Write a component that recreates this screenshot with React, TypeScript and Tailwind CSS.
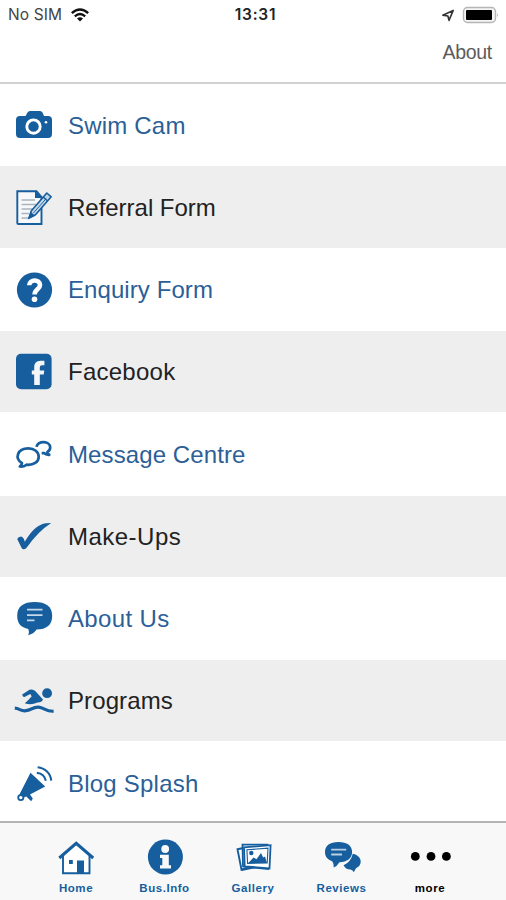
import React from "react";

const BLUE = "#165e9e";

// Icons are drawn in page coordinates; each svg's viewBox is the band it sits in.
const Camera = () => (
  <>
    <path d="M20 116H25.5L27.5 112.5Q28.3 111 30 111H40Q41.7 111 42.5 112.5L44 116H48Q52 116 52 120V134Q52 138 48 138H20Q16 138 16 134V120Q16 116 20 116Z" fill={BLUE} />
    <circle cx="33.5" cy="126.6" r="6.7" fill="none" stroke="#fff" strokeWidth="2.9" />
    <circle cx="46" cy="122.3" r="1.3" fill="#fff" />
  </>
);

const Referral = () => (
  <>
    <path d="M17.3 191.2H36.5L41.5 197V224H18.3Q17.3 224 17.3 223Z" fill="#f7f8fa" stroke={BLUE} strokeWidth="1.9" />
    <path d="M35 190.5L42.3 198H35Z" fill={BLUE} />
    <path d="M21.5 200H35M21.5 204.5H36M21.5 209H33M21.5 213.5H29M21.5 218H28" stroke="#a9b4bf" strokeWidth="1.3" />
    <path d="M29 218L31.2 211L46.8 193L51.2 196.8L35.5 214.8Z" fill="#c3d6e6" stroke={BLUE} strokeWidth="1.6" strokeLinejoin="round" />
    <path d="M43.2 197L47.6 201M29 218L31 213L33.8 215.5Z" stroke={BLUE} strokeWidth="1.4" fill={BLUE} />
    <path d="M33.4 213L46 198.8" stroke={BLUE} strokeWidth="0.9" />
  </>
);

const Question = () => (
  <>
    <circle cx="34.5" cy="290" r="17.6" fill={BLUE} />
    <path d="M29.2 285.3C29.4 279 40 278.8 40 285C40 289.5 34.6 289.3 34.6 294.6" fill="none" stroke="#fff" strokeWidth="4.6" />
    <circle cx="34.5" cy="299.3" r="2.8" fill="#fff" />
  </>
);

const Facebook = () => (
  <>
    <rect x="16" y="353.8" width="35.6" height="35.4" rx="5" fill={BLUE} />
    <path d="M34.2 385V374.6H31.8V370.4H34.2V367.5Q34.2 360.8 40.4 360.8H44.4V365.3H42Q39.8 365.3 39.8 367.6V370.4H44.3L43.7 374.6H39.8V385Z" fill="#f3f5f7" />
  </>
);

const Chats = () => (
  <g fill="none" stroke={BLUE} strokeWidth="2.7" strokeLinejoin="round">
    <path d="M22 463.2C14.5 458.5 17 448.3 28.3 448.3C34.5 448.3 38.7 452 38.7 456.7C38.7 462 33.5 465.4 26.5 464.7Q23.5 467 19.8 466.5Q21.8 465.5 22 463.2Z" />
    <path d="M36.6 446.8C37.4 440.6 50.2 440.3 50.2 447.5Q50.2 450.3 47.4 452Q47.5 453.8 49.3 454.8Q46 455 44 453.1L41.7 453.1" />
  </g>
);

const Check = () => (
  <path d="M17.2 539Q18.3 536.8 21 536.5Q23.6 537 24.8 541.7Q34.5 524.7 46 523.2L51.2 523Q38.5 531 27.2 547Q25.5 549.7 23.2 549.3Q22 549 21.5 547.8Z" fill={BLUE} />
);

const About = () => (
  <>
    <path d="M34.6 602C46 602 52.2 606.5 52.2 615.8C52.2 625 46.5 629.5 36.6 629.6Q33.5 634 28.3 635.3Q29.6 631.5 28.3 629C21 627.5 17.2 623.5 17.2 615.8C17.2 606.5 23.3 602 34.6 602Z" fill={BLUE} />
    <path d="M27 609.7H42.5M27 615.2H42.5M27 620.3H34.5" stroke="#c6d9e9" strokeWidth="1.8" />
  </>
);

const Swimmer = () => (
  <>
    <circle cx="47.1" cy="693.2" r="4.9" fill={BLUE} />
    <path d="M22.2 694.5L29.5 689.8Q33 688.7 35.2 691L43 699.5Q42 702.5 37.5 702.5Q31 705.5 24.8 703.2Q28 701 31.7 696.3L30.2 694L24.5 697Q22.4 697 22.2 694.5Z" fill={BLUE} />
    <path d="M14.8 708.2C20 708.5 20.5 711.4 26 710.7C31 710 33 706.9 38.5 707.2C44.5 707.8 46 711.8 53.6 711.2" fill="none" stroke={BLUE} strokeWidth="3.2" />
  </>
);

const Megaphone = () => (
  <>
    <path d="M30.5 772.7L45.2 786.5L30 794.4L32.8 798.5L31.2 801.2L26.3 796.5L23.5 797.5L19.8 793.8Z" fill={BLUE} />
    <circle cx="20.8" cy="797.6" r="2.6" fill="#fff" stroke={BLUE} strokeWidth="1.8" />
    <path d="M37.6 767.2C45 768 50.7 773.5 51.2 780.6M36.8 772.8C41.8 773.6 45 776.7 45.8 780.8" fill="none" stroke={BLUE} strokeWidth="2" />
  </>
);

const HomeIcon = () => (
  <>
    <path d="M63 855V873.2H89.5V855" fill="#fff" stroke={BLUE} strokeWidth="1.9" />
    <path d="M62 856L76.2 843.6L90.5 856Z" fill="#fff" />
    <path d="M59.3 858L76.2 843.3L93.2 858" fill="none" stroke={BLUE} strokeWidth="3" />
    <path d="M69 860H72.8V864H69ZM77 860.5H84V874H77Z" fill={BLUE} />
  </>
);

const Info = () => (
  <>
    <circle cx="165.4" cy="857" r="17.5" fill={BLUE} />
    <circle cx="165.2" cy="849" r="3.9" fill="#f8f9fa" />
    <path d="M160 854.7H168.8V865.3H171V868.6H160V865.3H162.3V858H160Z" fill="#f8f9fa" />
  </>
);

const Gallery = () => (
  <>
    <path d="M237.5 849.3L246 847.5L250 867L241.5 869.8Z" fill="#fff" stroke={BLUE} strokeWidth="1.9" />
    <path d="M241.5 869.8L261 865.8" stroke={BLUE} strokeWidth="2.4" />
    <path d="M242.5 844.6L267.5 844.6L268 869L243 866.4Z" fill="#fff" stroke={BLUE} strokeWidth="1.8" />
    <path d="M244 847.4L270.6 845.2L269.5 868.4L244.7 866.3Z" fill="#fff" stroke={BLUE} strokeWidth="1.8" />
    <path d="M246.9 849.8L268 848.2L267.2 863L247.6 863.4Z" fill="#fff" stroke={BLUE} strokeWidth="1.1" />
    <circle cx="251.3" cy="853" r="2.2" fill={BLUE} />
    <path d="M248.3 863L253.5 857.4L256.5 859.2L261 853L263.2 857.4L265 856.4L267 863Z" fill={BLUE} />
  </>
);

const Reviews = () => (
  <>
    <path d="M352.8 853.7C358.3 855 361 858.4 360.7 862.2Q360.2 866.2 356.2 868Q355 869.7 353.8 872.3Q353 870 350.4 869.6Q345.5 869.5 343.6 865.3Q350.8 862 352.8 853.7Z" fill={BLUE} />
    <path d="M338.4 842C347 842 352.1 845.6 352.1 852C352.1 858.5 347 862 339.5 862.2Q337 866.2 333.7 867.4Q334.3 864.2 332.2 861.2C327.5 859.7 325 856.7 325 852C325 845.6 330 842 338.4 842Z" fill={BLUE} />
    <path d="M331.2 849.6H346.2M331.2 854.5H342" stroke="#b9d0e2" strokeWidth="1.9" />
  </>
);

const More = () => (
  <>
    <circle cx="415.3" cy="856.4" r="4.4" />
    <circle cx="431" cy="856.4" r="4.4" />
    <circle cx="446.4" cy="856.4" r="4.4" />
  </>
);

const rows = [
  { label: "Swim Cam", top: 84, h: 82, height: "h-[82px]", text: "tracking-[0.2px] pt-px", Icon: Camera },
  { label: "Referral Form", top: 166, h: 82, height: "h-[82px]", text: "tracking-[-0.02px] pt-px", Icon: Referral },
  { label: "Enquiry Form", top: 248, h: 83, height: "h-[83px]", text: "tracking-[0.08px] pt-px", Icon: Question },
  { label: "Facebook", top: 331, h: 81, height: "h-[81px]", text: "tracking-[0.25px] pt-px", Icon: Facebook },
  { label: "Message Centre", top: 412, h: 84, height: "h-[84px]", text: "tracking-[0.1px] pt-px", Icon: Chats },
  { label: "Make-Ups", top: 496, h: 81, height: "h-[81px]", text: "tracking-[0.48px] pt-px", Icon: Check },
  { label: "About Us", top: 577, h: 83, height: "h-[83px]", text: "tracking-[0.35px] pt-px", Icon: About },
  { label: "Programs", top: 660, h: 81, height: "h-[81px]", text: "tracking-[0.1px] pt-px", Icon: Swimmer },
  { label: "Blog Splash", top: 741, h: 80, height: "h-[80px]", text: "tracking-[0.22px] pt-[5px]", Icon: Megaphone },
];

const tabs = [
  { label: "Home", x: 51, color: "text-[#165e9e]", Icon: HomeIcon },
  { label: "Bus.Info", x: 140, color: "text-[#165e9e]", Icon: Info },
  { label: "Gallery", x: 228, color: "text-[#165e9e]", Icon: Gallery },
  { label: "Reviews", x: 317, color: "text-[#165e9e]", Icon: Reviews },
  { label: "more", x: 405, color: "text-black", Icon: More },
];

export default function App() {
  return (
    <div className="flex h-[900px] w-[506px] flex-col overflow-hidden bg-white font-['Liberation_Sans',Arial,sans-serif]">
      <header className="flex h-[84px] flex-col border-b-2 border-[#d2d2d2]">
        <div className="grid h-[29px] grid-cols-3 items-center pr-[7px] pl-[8px] font-['Inter','Liberation_Sans',sans-serif]">
          <div className="flex items-center gap-[9px]">
            <span className="text-[15.5px] leading-none tracking-[0.1px] text-[#444]">No SIM</span>
            <svg width="18" height="14" viewBox="72 7 18 14" fill="none" stroke="#111" strokeWidth="2.4">
              <path d="M72.8 12.2Q81 5 89.2 12.2M75.8 15.3Q81 10.9 86.2 15.3" />
              <path d="M78 17.4Q81 14.9 84 17.4L81 20.6Z" fill="#111" stroke="none" />
            </svg>
          </div>
          <span className="pl-[4px] text-center text-[15.5px] leading-none font-semibold tracking-[0.75px] text-[#222]">13:31</span>
          <div className="flex items-center justify-end gap-[7px]">
            <svg width="14" height="14" viewBox="442 7 14 14" fill="none">
              <path d="M443.8 14.2L454.2 9.4L450 19.4L448.9 15Z" stroke="#333" strokeWidth="1.6" strokeLinejoin="round" />
            </svg>
            <svg width="37" height="18" viewBox="462 5 37 18">
              <rect x="463.5" y="6.5" width="32" height="15" rx="4" fill="#f4f4f4" stroke="#b5b5b5" strokeWidth="1.4" />
              <rect x="466" y="9" width="26" height="10" rx="1" fill="#000" />
              <path d="M497.3 12V16.2Q499 14.1 497.3 12Z" fill="#999" />
            </svg>
          </div>
        </div>
        <div className="flex justify-end pt-[11px] pr-[14px]">
          <span className="text-[19.5px] leading-[24px] tracking-[-0.3px] text-[#5c5c5c]">About</span>
        </div>
      </header>

      <main className="flex flex-col">
        {rows.map(({ label, top, h, height, text, Icon }, i) => (
          <div key={label} className={`flex items-center pl-[10px] ${height} ${i % 2 ? "bg-[#eeeeee] text-[#222]" : "bg-white text-[#2c5f98]"}`}>
            <svg width="50" height={h} viewBox={`10 ${top} 50 ${h}`} className="shrink-0">
              <Icon />
            </svg>
            <span className={`pl-[8px] text-[24px] leading-none whitespace-nowrap ${text}`}>{label}</span>
          </div>
        ))}
      </main>

      <nav className="grid h-[79px] grid-cols-[repeat(5,88.5px)] justify-center border-t-2 border-[#b4b4b4] bg-[#f8f8f8]">
        {tabs.map(({ label, x, color, Icon }) => (
          <div key={label} className={`flex flex-col items-center pt-[13px] ${color}`}>
            <svg width="50" height="42" viewBox={`${x} 836 50 42`} className="shrink-0">
              <Icon />
            </svg>
            <span className="pt-[3px] text-[11.5px] leading-[14px] font-bold tracking-[0.55px]">{label}</span>
          </div>
        ))}
      </nav>
    </div>
  );
}
